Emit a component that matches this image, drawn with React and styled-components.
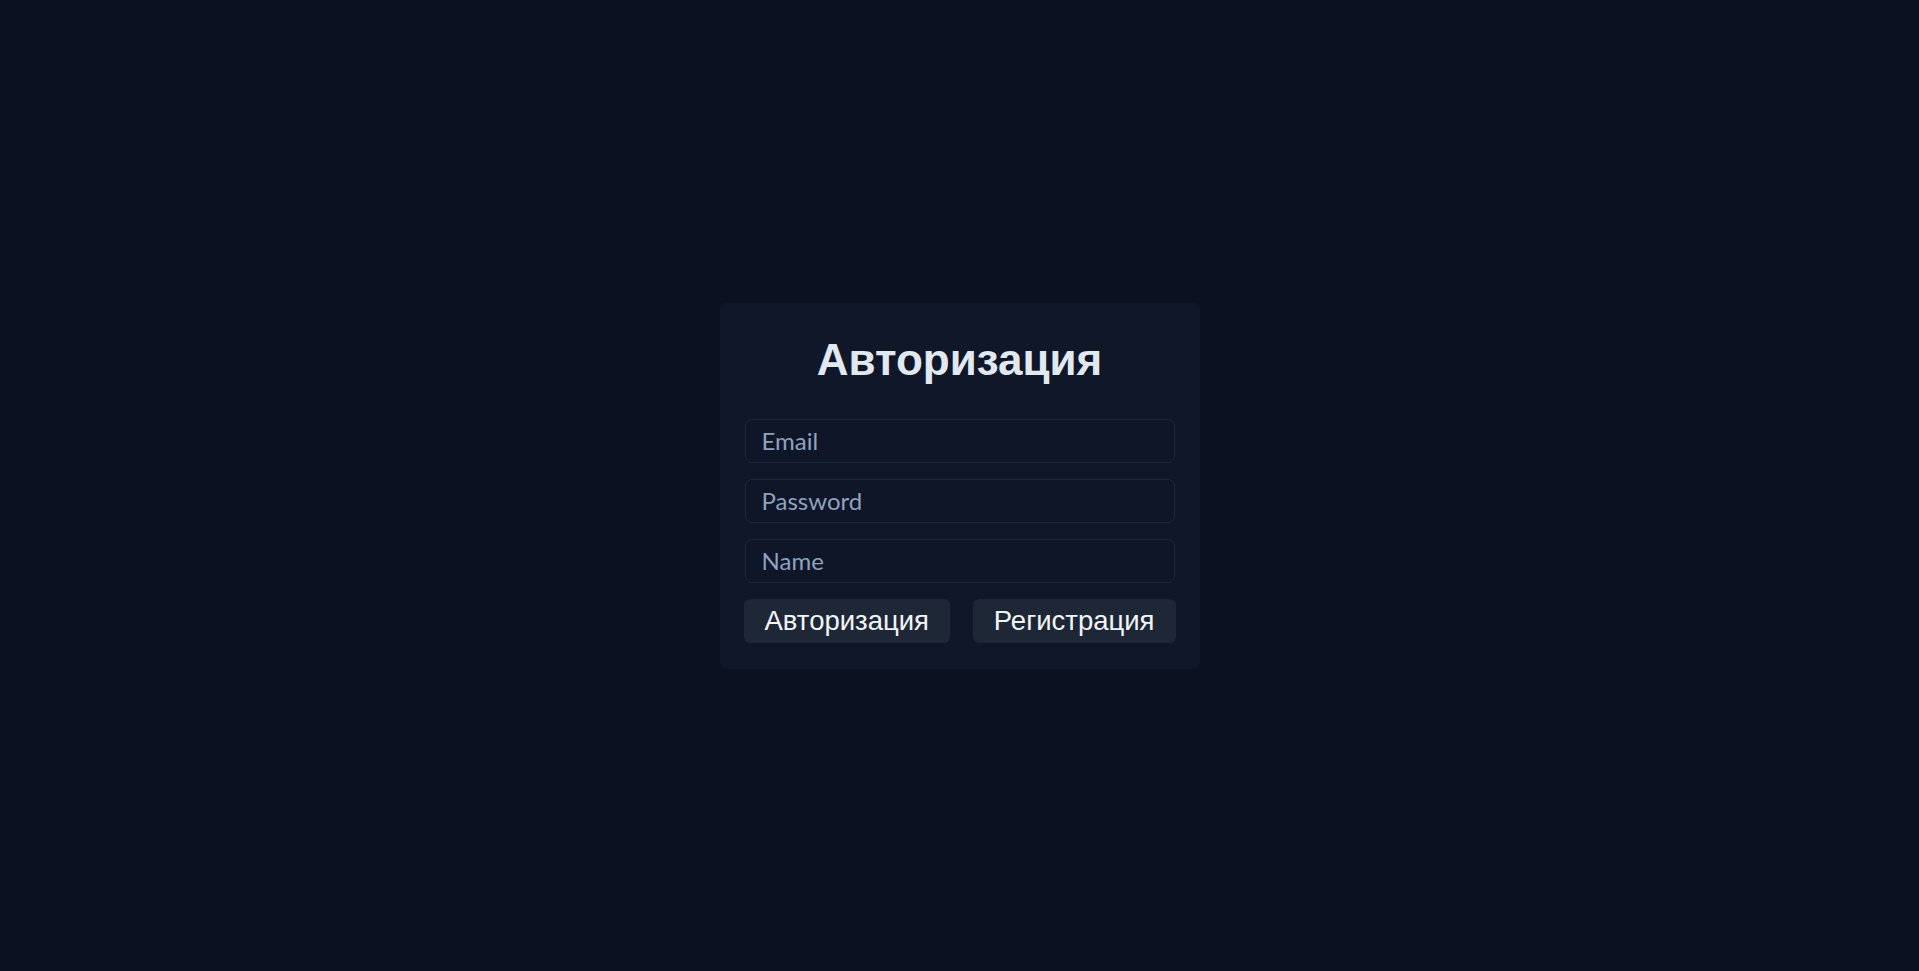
import React from "react";
import styled, { createGlobalStyle } from "styled-components";

const GlobalStyle = createGlobalStyle`
  html, body {
    margin: 0;
    padding: 0;
    background: #0b1120;
  }
  body {
    font-family: "Liberation Sans", Arial, sans-serif;
  }
  * { box-sizing: border-box; }
`;

const Page = styled.div`
  min-height: 100vh;
  display: flex;
  align-items: center;
  justify-content: center;
  background: #0b1120;
`;

const Card = styled.form`
  width: 480px;
  display: flex;
  flex-direction: column;
  padding: 29px 24px 26px;
  background: #0f1729;
  border-radius: 6px;
`;

const Title = styled.h1`
  margin: 0 0 31px;
  font-family: "Liberation Sans", Arial, sans-serif;
  font-size: 44px;
  line-height: 56px;
  font-weight: 700;
  color: #e2e8f0;
  text-align: center;
`;

const Fields = styled.div`
  display: flex;
  flex-direction: column;
  gap: 16px;
  padding: 0 1px;
`;

const Input = styled.input`
  width: 100%;
  height: 44px;
  padding: 0 16px;
  background: #0e1628;
  border: 1px solid #1e293b;
  border-radius: 7px;
  color: #e2e8f0;
  font-family: Lato, "Noto Sans", sans-serif;
  font-size: 24px;
  outline: none;
  &::placeholder {
    color: #8fa2bd;
  }
`;

const Actions = styled.div`
  display: flex;
  justify-content: space-between;
  margin-top: 16px;
`;

const Button = styled.button`
  height: 44px;
  padding: 0 21px;
  background: #1e2736;
  border: none;
  border-radius: 6px;
  color: #f1f5f9;
  font-family: "Liberation Sans", Arial, sans-serif;
  font-size: 27.5px;
  cursor: pointer;
`;

export default function App() {
  return (
    <>
      <GlobalStyle />
      <Page>
        <Card onSubmit={(e) => e.preventDefault()}>
          <Title>Авторизация</Title>
          <Fields>
            <Input type="email" placeholder="Email" />
            <Input type="password" placeholder="Password" />
            <Input type="text" placeholder="Name" />
          </Fields>
          <Actions>
            <Button type="button">Авторизация</Button>
            <Button type="button">Регистрация</Button>
          </Actions>
        </Card>
      </Page>
    </>
  );
}
